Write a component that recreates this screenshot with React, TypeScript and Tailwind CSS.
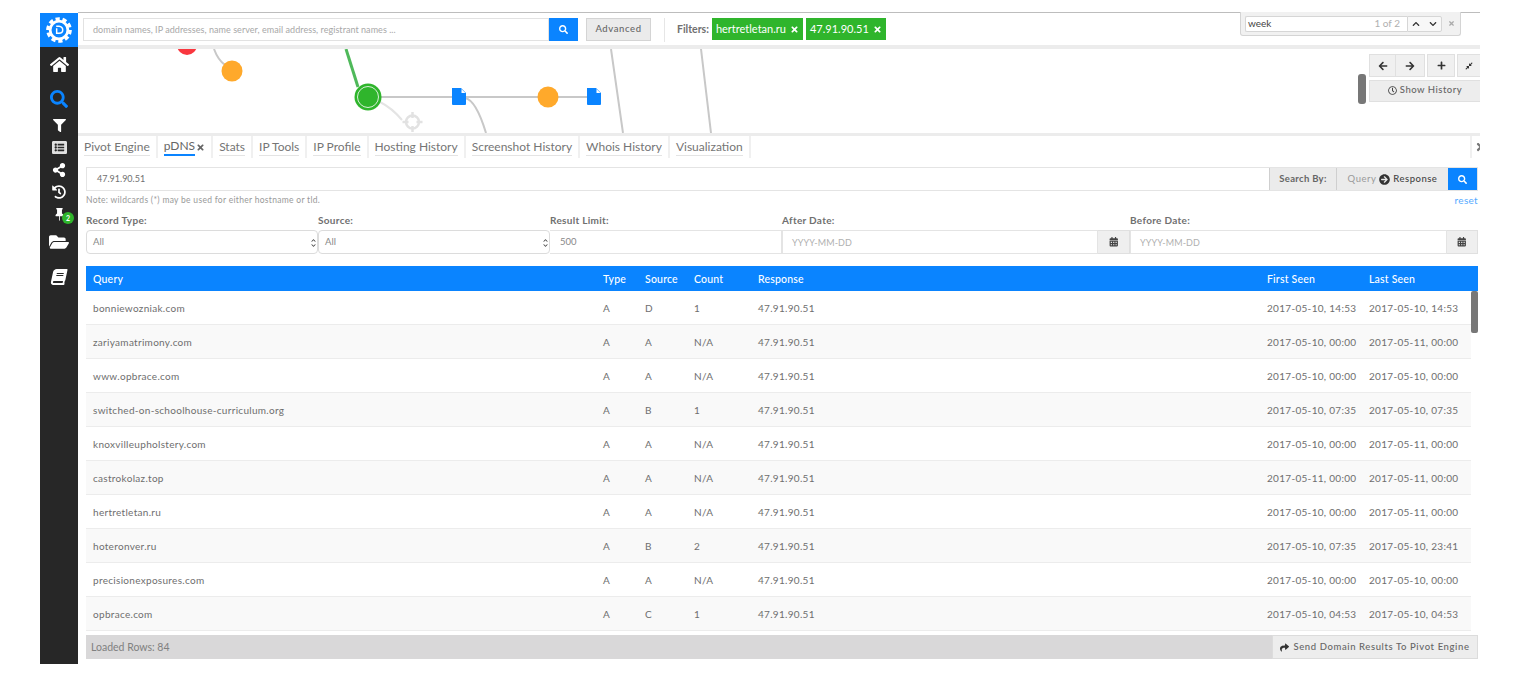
import {
	FaArrowCircleRight,
	FaArrowLeft,
	FaArrowRight,
	FaBook,
	FaCalendarAlt,
	FaChevronDown,
	FaChevronUp,
	FaCompressAlt,
	FaFilter,
	FaFolderOpen,
	FaHistory,
	FaHome,
	FaListAlt,
	FaPlus,
	FaRegClock,
	FaSearch,
	FaShare,
	FaShareAlt,
	FaTimes,
} from 'react-icons/fa';
import { BsPinFill } from 'react-icons/bs';

const tabs = [
	'Pivot Engine',
	'pDNS',
	'Stats',
	'IP Tools',
	'IP Profile',
	'Hosting History',
	'Screenshot History',
	'Whois History',
	'Visualization',
];

const rows = [
	['bonniewozniak.com', 'A', 'D', '1', '2017-05-10, 14:53', '2017-05-10, 14:53'],
	['zariyamatrimony.com', 'A', 'A', 'N/A', '2017-05-10, 00:00', '2017-05-11, 00:00'],
	['www.opbrace.com', 'A', 'A', 'N/A', '2017-05-10, 00:00', '2017-05-10, 00:00'],
	['switched-on-schoolhouse-curriculum.org', 'A', 'B', '1', '2017-05-10, 07:35', '2017-05-10, 07:35'],
	['knoxvilleupholstery.com', 'A', 'A', 'N/A', '2017-05-10, 00:00', '2017-05-11, 00:00'],
	['castrokolaz.top', 'A', 'A', 'N/A', '2017-05-11, 00:00', '2017-05-11, 00:00'],
	['hertretletan.ru', 'A', 'A', 'N/A', '2017-05-10, 00:00', '2017-05-11, 00:00'],
	['hoteronver.ru', 'A', 'B', '2', '2017-05-10, 07:35', '2017-05-10, 23:41'],
	['precisionexposures.com', 'A', 'A', 'N/A', '2017-05-10, 00:00', '2017-05-10, 00:00'],
	['opbrace.com', 'A', 'C', '1', '2017-05-10, 04:53', '2017-05-10, 04:53'],
];

const DocIcon = ({ x, y }: { x: number; y: number }) => (
	<g transform={`translate(${x} ${y})`}>
		<path d="M-7 -9 H2 L7 -4 V7 Q7 8 6 8 H-6 Q-7 8 -7 7 Z" fill="#0a84ff" />
		<path d="M2.5 -8 L6.5 -4 H2.5 Z" fill="#ffffff" />
	</g>
);

const Graph = () => (
	<svg className="block h-[84px] w-[1402px]" viewBox="78 49 1402 84">
		<circle cx="187" cy="45" r="10" fill="#f9373f" />
		<path d="M214 49 Q218 60 225 65" fill="none" stroke="#c8c8c8" strokeWidth="2" />
		<circle cx="232" cy="71" r="10.5" fill="#ffa92b" />
		<path d="M346 49 L358 87" fill="none" stroke="#4fb95a" strokeWidth="3" />
		<path d="M380 102 Q392 108 402 120" fill="none" stroke="#e4e4e4" strokeWidth="2" />
		<path d="M368 97 H594" fill="none" stroke="#c8c8c8" strokeWidth="2" />
		<path d="M465 98 Q476 100 486 133" fill="none" stroke="#c8c8c8" strokeWidth="2" />
		<path d="M611 49 L623 133 M701 49 L711 133" fill="none" stroke="#c8c8c8" strokeWidth="2" />
		<circle cx="368" cy="97" r="13.5" fill="#2fb52c" />
		<circle cx="368" cy="97" r="10.5" fill="#2fb52c" stroke="#d8f0d8" strokeWidth="1" />
		<DocIcon x={459} y={97} />
		<circle cx="548" cy="97" r="10.5" fill="#ffa92b" />
		<DocIcon x={594} y={97} />
		<circle cx="412.5" cy="122" r="6.5" fill="#ffffff" stroke="#e2e2e2" strokeWidth="2.5" />
		<path d="M412.5 112 V118 M412.5 126 V132 M402.5 122 H408.5 M416.5 122 H422.5" stroke="#e2e2e2" strokeWidth="2.5" />
	</svg>
);

const Logo = () => (
	<svg className="h-[28px] w-[28px]" viewBox="0 0 30 30">
		<g fill="none" stroke="#ffffff">
			<circle cx="15" cy="15" r="9.5" strokeWidth="3" />
			<circle cx="15" cy="15" r="12" strokeWidth="3.5" strokeDasharray="4.5 3" />
		</g>
		<path d="M12 11 H15 Q19 11.5 19 15 Q19 18.5 15 18.5 H12.5 V13" fill="none" stroke="#ffffff" strokeWidth="1.6" />
	</svg>
);

const Sidebar = () => (
	<div className="flex h-[651px] w-[38px] shrink-0 flex-col items-center bg-[#272727] text-white">
		<div className="flex h-[34px] w-full items-center justify-center bg-[#0a84ff]">
			<Logo />
		</div>
		<FaHome className="mt-[8px] text-[19px]" />
		<FaSearch className="mt-[16px] text-[18px] text-[#0a84ff]" />
		<FaFilter className="mt-[11px] text-[13px]" />
		<FaListAlt className="mt-[8px] text-[15px] text-[#e0e0e0]" />
		<FaShareAlt className="mt-[8px] text-[14px]" />
		<FaHistory className="mt-[8px] text-[14px]" />
		<div className="relative mt-[9px] h-[14px] w-[14px]">
			<BsPinFill className="ml-[1px] text-[13px]" />
			<span className="absolute left-[10px] top-[4px] flex h-[12px] w-[12px] items-center justify-center rounded-full bg-[#2fb52c] text-[7px] font-bold">
				2
			</span>
		</div>
		<FaFolderOpen className="mt-[10px] text-[20px]" />
		<FaBook className="mt-[17px] -skew-x-12 text-[16px]" />
	</div>
);

const TopBar = () => (
	<div className="flex h-[32px] items-start pl-[5px] pt-[5px]">
		<div className="flex h-[23px] w-[466px] items-center border border-[#e2e2e2] pl-[9px] text-[9px] tracking-[0.05px] text-[#a8a8a8]">
			domain names, IP addresses, name server, email address, registrant names ...
		</div>
		<div className="flex h-[23px] w-[29px] items-center justify-center bg-[#0a84ff] text-[9px] text-white">
			<FaSearch />
		</div>
		<div className="ml-[8px] flex h-[23px] w-[65px] items-center justify-center border border-[#d4d4d4] bg-[#ebebeb] text-[9.5px] font-medium tracking-[0.6px] text-[#666666]">
			Advanced
		</div>
		<div className="ml-[13px] h-[24px] w-px bg-[#e6e6e6]" />
		<span className="ml-[12px] mr-[3px] mt-[4px] text-[10.5px] font-bold text-[#707070]">Filters:</span>
		<div className="flex h-[22px] w-[91px] items-center justify-center gap-[4px] bg-[#2fb52c] text-[11px] text-white">
			hertretletan.ru
			<FaTimes className="text-[9px]" />
		</div>
		<div className="ml-[3px] flex h-[22px] w-[80px] items-center justify-center gap-[4px] bg-[#2fb52c] text-[11px] text-white">
			47.91.90.51
			<FaTimes className="text-[9px]" />
		</div>
	</div>
);

const FindBar = () => (
	<div className="absolute left-[1240px] top-[12px] flex h-[24px] w-[221px] items-center rounded-b-[3px] border border-t-0 border-[#d4d4d4] bg-[#f1f1f1] pl-[4px]">
		<div className="flex h-[16px] w-[162px] items-center justify-between rounded-l-[2px] border border-r-0 border-[#d6d6d6] bg-white px-[2px] text-[10px] text-[#444444]">
			<span>week</span>
			<span className="mr-[5px] text-[#b0b0b0]">1 of 2</span>
		</div>
		<div className="flex h-[16px] w-[35px] items-center justify-around rounded-r-[2px] border border-[#d6d6d6] bg-[#f8f8f8] text-[8px] text-[#333333]">
			<FaChevronUp />
			<FaChevronDown />
		</div>
		<FaTimes className="ml-[6px] text-[7px] text-[#aaaaaa]" />
	</div>
);

const GraphControls = () => (
	<div className="absolute right-0 top-[3px] flex items-center gap-[3px] overflow-hidden">
		<div className="mt-[22px] h-[30px] w-[8px] rounded-[3px] bg-[#777777]" />
		<div className="flex w-[111px] flex-col gap-[3px]">
			<div className="flex h-[23px] text-[10px] text-[#333333]">
				<div className="flex w-[27px] items-center justify-center border border-[#e0e0e0] bg-[#f0f0f0]">
					<FaArrowLeft />
				</div>
				<div className="flex w-[29px] items-center justify-center border border-l-0 border-[#e0e0e0] bg-[#f0f0f0]">
					<FaArrowRight />
				</div>
				<div className="ml-[2px] flex w-[28px] items-center justify-center border border-[#e0e0e0] bg-[#f0f0f0]">
					<FaPlus className="text-[9px]" />
				</div>
				<div className="ml-[2px] flex w-[23px] items-center justify-center border border-r-0 border-[#e0e0e0] bg-[#f0f0f0]">
					<FaCompressAlt className="text-[8px]" />
				</div>
			</div>
			<div className="flex h-[22px] items-center justify-center gap-[3px] border border-r-0 border-[#e0e0e0] bg-[#ededed] pb-px text-[9.5px] font-medium tracking-[0.5px] text-[#666666]">
				<FaRegClock className="text-[9px] text-[#444444]" />
				Show History
			</div>
		</div>
	</div>
);

const Tabs = () => (
	<div className="relative flex h-[22px] text-[12px] text-[#757575]">
		{tabs.map((tab) => (
			<div key={tab} className="flex items-center border-r-2 border-[#f0f0f0] px-[6px]">
				<span
					className={
						tab === 'pDNS'
							? 'flex h-[17px] items-center border-b-2 border-[#0a84ff] text-[#666666]'
							: 'flex h-[17px] items-center border-b border-[#e4e4e4]'
					}
				>
					{tab}
				</span>
				{tab === 'pDNS' && <FaTimes className="ml-px text-[9px] text-[#666666]" />}
			</div>
		))}
		<div className="absolute right-0 top-0 flex h-[22px] w-[10px] items-center overflow-hidden border-l-2 border-[#f0f0f0] pl-[3px] text-[12px] text-[#777777]">
			<FaTimes className="shrink-0" />
		</div>
	</div>
);

const Label = ({ children, className }: { children: string; className: string }) => (
	<div className={`text-[10px] font-bold tracking-[0.3px] text-[#707070] ${className}`}>{children}</div>
);

const Filters = () => (
	<div className="mt-[4px] text-[9.5px] text-[#888888]">
		<div className="flex h-[17px] items-start">
			<Label className="w-[232px]">Record Type:</Label>
			<Label className="w-[232px]">Source:</Label>
			<Label className="w-[232px]">Result Limit:</Label>
			<Label className="w-[348px]">After Date:</Label>
			<Label className="w-[200px]">Before Date:</Label>
		</div>
		<div className="flex h-[24px]">
			{['All', 'All'].map((value, i) => (
				<div
					key={i}
					className="flex w-[232px] items-center justify-between rounded-[4px] border border-[#dcdcdc] pl-[6px] pr-[1px] pt-px"
				>
					{value}
					<span className="flex flex-col text-[5px] leading-[5px] text-[#444444]">
						<FaChevronUp />
						<FaChevronDown />
					</span>
				</div>
			))}
			<div className="flex w-[232px] items-center border border-l-0 border-[#e4e4e4] pl-[10px] pt-px">500</div>
			<div className="flex w-[316px] items-center border border-[#e4e4e4] pl-[9px] pt-px text-[9px] tracking-[0.1px] text-[#b0b0b0]">YYYY-MM-DD</div>
			<div className="flex w-[32px] items-center justify-center border border-l-0 border-[#e0e0e0] bg-[#efefef] text-[#444444]">
				<FaCalendarAlt />
			</div>
			<div className="flex w-[317px] items-center border border-[#e4e4e4] pl-[9px] pt-px text-[9px] tracking-[0.1px] text-[#b0b0b0]">YYYY-MM-DD</div>
			<div className="flex w-[31px] items-center justify-center border border-l-0 border-[#e0e0e0] bg-[#efefef] text-[#444444]">
				<FaCalendarAlt />
			</div>
		</div>
	</div>
);

const Table = () => (
	<div className="relative mt-[12px] text-[10px] tracking-[0.3px] text-[#6e6e6e]">
		<div className="grid h-[25px] grid-cols-[510px_42px_49px_64px_509px_102px_1fr] items-center bg-[#0a84ff] pl-[7px] pt-[2px] text-[10.5px] font-medium tracking-[0.2px] text-white">
			<div>Query</div>
			<div>Type</div>
			<div>Source</div>
			<div>Count</div>
			<div>Response</div>
			<div>First Seen</div>
			<div>Last Seen</div>
		</div>
		<div className="h-[344px] w-[1385px]">
			{rows.map((row, i) => (
				<div
					key={row[0]}
					className={
						i % 2 === 0
							? 'grid h-[34px] grid-cols-[510px_42px_49px_64px_509px_102px_1fr] items-center border-b border-[#ececec] bg-white pl-[7px] pt-px'
							: 'grid h-[34px] grid-cols-[510px_42px_49px_64px_509px_102px_1fr] items-center border-b border-[#ececec] bg-[#f9f9f9] pl-[7px] pt-px'
					}
				>
					<div>{row[0]}</div>
					<div>{row[1]}</div>
					<div>{row[2]}</div>
					<div>{row[3]}</div>
					<div>47.91.90.51</div>
					<div>{row[4]}</div>
					<div>{row[5]}</div>
				</div>
			))}
		</div>
		<div className="absolute right-0 top-[25px] h-[42px] w-[7px] rounded-[2px] bg-[#777777]" />
	</div>
);

const App = () => {
	return (
		<div className="relative h-[690px] w-[1524px] overflow-hidden bg-white pl-10 pt-3 font-['Lato',sans-serif]">
			<div className="flex w-[1440px]">
				<div className="mt-px">
					<Sidebar />
				</div>
				<div className="w-[1402px] border-t border-[#bdbdbd]">
					<TopBar />
					<div className="h-[4px] bg-[#ececec]" />
					<div className="relative h-[84px]">
						<Graph />
						<GraphControls />
					</div>
					<div className="h-[3px] bg-[#ececec]" />
					<Tabs />
					<div className="pl-[8px] pr-[2px]">
						<div className="mt-[9px] flex h-[24px] border border-[#e4e4e4] text-[9.5px]">
							<div className="flex flex-1 items-center pl-[10px] text-[9px] text-[#707070]">47.91.90.51</div>
							<div className="flex w-[67px] items-center justify-center border-l border-[#cfcfcf] bg-[#ebebeb] font-bold tracking-[0.3px] text-[#666666]">
								Search By:
							</div>
							<div className="flex w-[112px] items-center justify-center gap-[3px] border-l border-[#cfcfcf] bg-[#ebebeb] tracking-[0.5px] text-[#9a9a9a]">
								Query
								<FaArrowCircleRight className="text-[11px] text-[#333333]" />
								<span className="font-medium text-[#444444]">Response</span>
							</div>
							<div className="flex w-[29px] items-center justify-center bg-[#0a84ff] text-[9px] text-white">
								<FaSearch />
							</div>
						</div>
						<div className="flex h-[18px] items-center justify-between text-[8.5px] tracking-[0.3px] text-[#999999]">
							<span>Note: wildcards (*) may be used for either hostname or tld.</span>
							<span className="text-[10px] text-[#55aaff]">reset</span>
						</div>
						<Filters />
						<Table />
						<div className="flex h-[24px] items-center justify-between bg-[#d9d8d9] pl-[5px] text-[10.5px] text-[#808080]">
							<span className="pt-[2px]">Loaded Rows: 84</span>
							<div className="flex h-full w-[206px] items-center justify-center gap-[4px] border border-[#dcdcdc] bg-[#ededed] text-[9.5px] font-medium tracking-[0.6px] text-[#666666]">
								<FaShare className="text-[9px] text-[#333333]" />
								Send Domain Results To Pivot Engine
							</div>
						</div>
					</div>
				</div>
			</div>
			<FindBar />
		</div>
	);
};

export default App;
